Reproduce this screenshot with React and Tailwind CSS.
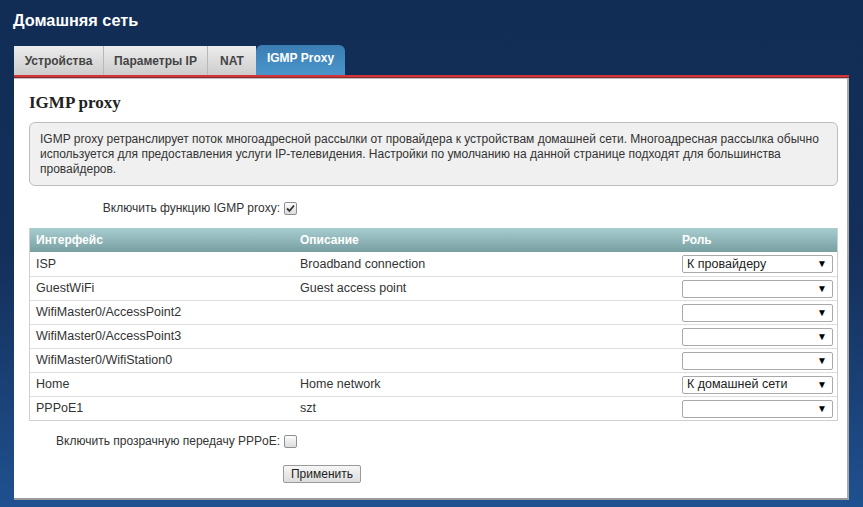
import React from "react";

const rows = [
  { i: "ISP", d: "Broadband connection", r: "К провайдеру" },
  { i: "GuestWiFi", d: "Guest access point", r: "" },
  { i: "WifiMaster0/AccessPoint2", d: "", r: "" },
  { i: "WifiMaster0/AccessPoint3", d: "", r: "" },
  { i: "WifiMaster0/WifiStation0", d: "", r: "" },
  { i: "Home", d: "Home network", r: "К домашней сети" },
  { i: "PPPoE1", d: "szt", r: "" },
];

function Select({ value }) {
  return (
    <div className="w-[151px] h-[18px] border border-[#a9a9a9] rounded-[2px] bg-white flex items-center justify-between pl-[4px] pr-[5px] text-[12.5px] text-[#222]">
      <span>{value}</span>
      <span className="text-[10px] leading-none text-black">▼</span>
    </div>
  );
}

function Check({ checked }) {
  return (
    <div className="w-[13px] h-[13px] border border-[#8f8f8f] rounded-[2px] bg-gradient-to-b from-[#fcfcfc] to-[#dcdcdc] flex items-center justify-center">
      {checked && (
        <svg width="9" height="9" viewBox="0 0 9 9">
          <path d="M1 4.5 L3.5 7 L8 1.5" stroke="#333" strokeWidth="1.8" fill="none" />
        </svg>
      )}
    </div>
  );
}

export default function App() {
  return (
    <div
      className="w-[863px] h-[507px] overflow-hidden bg-gradient-to-b from-[#112d55] via-[#142f5a] to-[#1f5190] text-[#333]"
      style={{ fontFamily: '"Liberation Sans", Arial, sans-serif' }}
    >
      <div className="pl-[13px] pt-[11px] h-[45px]">
        <h1 className="text-white font-bold text-[16.3px] leading-[18px]">Домашняя сеть</h1>
      </div>
      <div className="ml-[14px] w-[835px]">
        <div className="flex items-end h-[30px]">
          <div className="h-[29px] w-[90px] flex items-center justify-center bg-gradient-to-b from-[#ececec] to-[#cdcdcd] border-r border-[#b8b8b8] text-[12px] font-bold text-[#444]">Устройства</div>
          <div className="h-[29px] w-[104px] flex items-center justify-center bg-gradient-to-b from-[#ececec] to-[#cdcdcd] border-r border-[#b8b8b8] text-[12px] font-bold text-[#444]">Параметры IP</div>
          <div className="h-[29px] w-[48px] flex items-center justify-center bg-gradient-to-b from-[#ececec] to-[#cdcdcd] text-[12px] font-bold text-[#444]">NAT</div>
          <div className="h-[30px] w-[89px] flex items-center justify-center rounded-t-[6px] bg-gradient-to-b from-[#3b7db3] to-[#4a96cb] text-[12px] font-bold text-white pb-[4px]">IGMP Proxy</div>
        </div>
        <div className="h-[3px] bg-[#d2353a] border-b border-[#8b2b2b]"></div>
        <div className="bg-white h-[422px] border-t border-[#bdbdbd] border-r-2 border-r-[#a9a9a9] border-b-2 border-b-[#9a9a9a] pl-[15px] pr-[9px]">
          <h2 className="pt-[14px] text-[17px] font-bold text-[#222] leading-[20px]" style={{ fontFamily: '"Liberation Serif", "Times New Roman", serif' }}>IGMP proxy</h2>
          <div className="mt-[9px] h-[64px] rounded-[6px] border border-[#bdbdbd] bg-[#f0f0f0] px-[10px] pt-[9px] text-[12px] leading-[15px] text-[#333]">
            IGMP proxy ретранслирует поток многоадресной рассылки от провайдера к устройствам домашней сети. Многоадресная рассылка обычно используется для предоставления услуги IP-телевидения. Настройки по умолчанию на данной странице подходят для большинства провайдеров.
          </div>
          <div className="mt-[14px] flex items-center h-[16px] text-[12px]">
            <span className="w-[255px] text-right pr-[4px]">Включить функцию IGMP proxy:</span>
            <Check checked />
          </div>
          <div className="mt-[12px] w-[809px] border-l border-r border-b border-[#cfcfcf]">
            <div className="h-[24px] flex items-center bg-gradient-to-b from-[#a8cdd0] to-[#789fa1] text-white font-bold text-[12px]">
              <div className="w-[264px] pl-[6px]">Интерфейс</div>
              <div className="w-[388px] pl-[6px]">Описание</div>
              <div className="pl-[0px]">Роль</div>
            </div>
            {rows.map((r, idx) => (
              <div key={idx} className={"h-[24px] flex items-center text-[12.5px] text-[#333] " + (idx > 0 ? "border-t border-[#dedede]" : "")}>
                <div className="w-[264px] pl-[6px]">{r.i}</div>
                <div className="w-[388px] pl-[6px]">{r.d}</div>
                <Select value={r.r} />
              </div>
            ))}
          </div>
          <div className="mt-[12px] flex items-center h-[16px] text-[12px]">
            <span className="w-[255px] text-right pr-[4px]">Включить прозрачную передачу PPPoE:</span>
            <Check />
          </div>
          <div className="mt-[12px] pl-[254px]">
            <button className="h-[18px] w-[78px] border border-[#9a9a9a] rounded-[2px] bg-gradient-to-b from-[#f6f6f6] to-[#dddddd] text-[12px] text-[#222] leading-none">Применить</button>
          </div>
        </div>
      </div>
    </div>
  );
}
